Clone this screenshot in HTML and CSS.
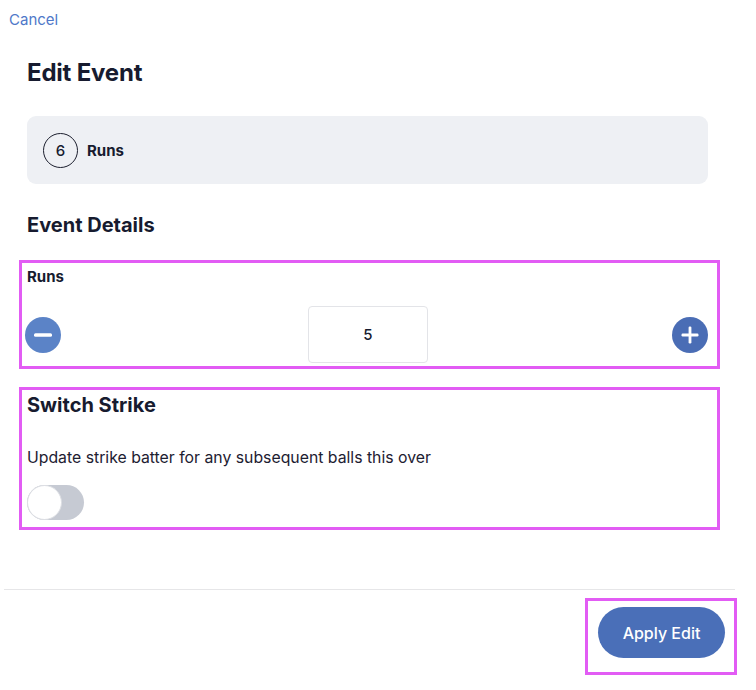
FILE: index.html
```html
<!DOCTYPE html>
<html lang="en">
<head>
<meta charset="utf-8">
<title>Edit Event</title>
<link rel="stylesheet" href="styles.css">
</head>
<body>
<div class="page">
  <header class="top">
    <a class="cancel" href="#">Cancel</a>
  </header>
  <main class="content">
    <h1 class="title">Edit Event</h1>
    <div class="event-card">
      <span class="ball">6</span>
      <span class="event-name">Runs</span>
    </div>
    <h2 class="section-title">Event Details</h2>
    <section class="highlight runs-box">
      <div class="field-label">Runs</div>
      <div class="stepper">
        <button class="step minus" aria-label="Decrease">
          <svg viewBox="0 0 36 36" width="36" height="36"><circle cx="18" cy="18" r="18" fill="#5b83c7"/><rect x="9" y="16.3" width="18" height="3.4" rx="1.5" fill="#fff"/></svg>
        </button>
        <div class="value-box">5</div>
        <button class="step plus" aria-label="Increase">
          <svg viewBox="0 0 36 36" width="36" height="36"><circle cx="18" cy="18" r="18" fill="#4a6db5"/><rect x="9.5" y="16.6" width="17" height="2.8" rx="1.2" fill="#fff"/><rect x="16.6" y="9.5" width="2.8" height="17" rx="1.2" fill="#fff"/></svg>
        </button>
      </div>
    </section>
    <section class="highlight strike-box">
      <h3 class="strike-title">Switch Strike</h3>
      <p class="strike-desc">Update strike batter for any subsequent balls this over</p>
      <div class="toggle"><span class="knob"></span></div>
    </section>
  </main>
  <footer class="footer">
    <div class="highlight btn-wrap">
      <button class="apply">Apply Edit</button>
    </div>
  </footer>
</div>
</body>
</html>
```

FILE: styles.css
```css
* { box-sizing: border-box; }
html, body { margin: 0; padding: 0; background: #fff; }
body {
  font-family: Inter, "Noto Sans", "Liberation Sans", sans-serif;
  color: #171b2f;
  width: 756px;
  height: 690px;
  overflow: hidden;
}
.page { width: 740px; }
.top { padding: 9px 0 0 9px; height: 36px; }
.cancel {
  color: #4f78c9;
  text-decoration: none;
  font-size: 15px;
  line-height: 20px;
}
.content { padding: 0 32px 0 27px; }
.title {
  margin: 22px 0 0 0;
  font-size: 24px;
  line-height: 30px;
  font-weight: 700;
  letter-spacing: -0.2px;
}
.event-card {
  margin-top: 28px;
  height: 68px;
  background: #eef0f4;
  border-radius: 9px;
  display: flex;
  align-items: center;
  padding: 0 16px;
}
.ball {
  width: 35px;
  height: 35px;
  border: 1px solid #1c1f2e;
  border-radius: 50%;
  display: flex;
  align-items: center;
  justify-content: center;
  font-size: 15px;
  font-weight: 500;
}
.event-name {
  margin-left: 9px;
  font-size: 15px;
  font-weight: 700;
}
.section-title {
  margin: 28px 0 0 0;
  font-size: 20px;
  line-height: 26px;
  font-weight: 700;
}
.highlight { border: 3px solid #e25cf4; }
.runs-box {
  margin: 22px -12px 0 -8px;
  height: 109px;
  padding: 4px 9px 3px 5px;
  display: flex;
  flex-direction: column;
}
.field-label {
  font-size: 15px;
  line-height: 20px;
  font-weight: 700;
}
.stepper {
  margin-top: auto;
  display: flex;
  align-items: center;
  justify-content: space-between;
  height: 57px;
}
.step {
  border: 0;
  padding: 0;
  background: none;
  width: 36px;
  height: 36px;
  display: block;
}
.step svg { display: block; }
.step.minus { margin-left: -2px; }
.value-box {
  width: 120px;
  height: 57px;
  border: 1px solid #e3e4e8;
  border-radius: 4px;
  display: flex;
  align-items: center;
  justify-content: center;
  font-size: 15px;
  font-weight: 500;
  margin-left: 3px;
}
.strike-box {
  margin: 18px -12px 0 -8px;
  height: 143px;
  padding: 2px 9px 0 5px;
}
.strike-title {
  margin: 0;
  font-size: 20px;
  line-height: 26px;
  font-weight: 700;
}
.strike-desc {
  margin: 29px 0 0 0;
  font-size: 15.8px;
  line-height: 21px;
  color: #1d2031;
}
.toggle {
  margin-top: 17px;
  width: 57px;
  height: 35px;
  border-radius: 18px;
  background: #c6cad3;
  position: relative;
}
.knob {
  position: absolute;
  left: 0;
  top: 0;
  width: 35px;
  height: 35px;
  border-radius: 50%;
  background: #fff;
  border: 1px solid #dcdee3;
}
.footer {
  margin: 59px 0 0 4px;
  border-top: 1px solid #e6e6e8;
  padding-top: 8px;
  display: flex;
  justify-content: flex-end;
  width: 731px;
}
.btn-wrap {
  width: 152px;
  height: 77px;
  padding: 6px 0 0 10px;
  margin-right: -2px;
}
.apply {
  width: 127px;
  height: 51px;
  border: 0;
  border-radius: 26px;
  background: #4a6fb8;
  color: #fff;
  font-family: Inter, "Noto Sans", "Liberation Sans", sans-serif;
  font-size: 16px;
  font-weight: 500;
}
```
